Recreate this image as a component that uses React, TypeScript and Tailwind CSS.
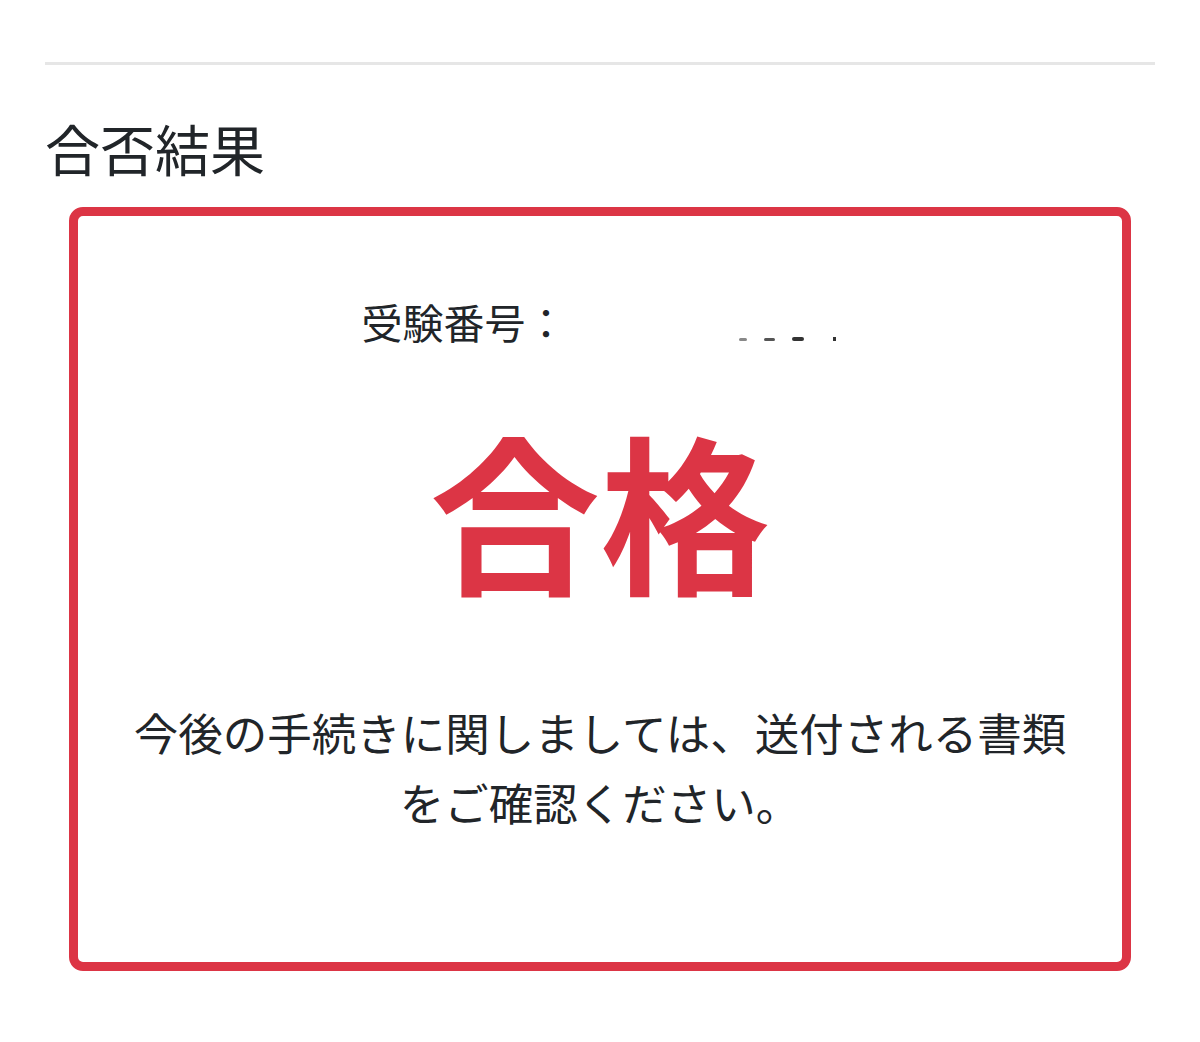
export default function App() {
  return (
    <div
      className="flex min-h-[1042px] w-[1200px] flex-col bg-white text-[#212529]"
      style={{ fontFamily: '"Noto Sans CJK JP", "Noto Sans", sans-serif' }}
    >
      <div className="px-[45px] pt-[62px]">
        <hr className="border-0 border-t-[3px] border-[#e6e6e6]" />
      </div>

      <h2 className="mt-[49px] pl-[45px] text-[55px] font-normal leading-[1.2]">合否結果</h2>

      {/* result card */}
      <div className="mx-[69px] mt-[27px] flex h-[764px] flex-col items-center rounded-[14px] border-[9px] border-[#dc3545] px-[40px] pt-[75px] text-center">
        <div className="flex items-center text-[41px] leading-[1.5]">
          <span>受験番号：</span>
          {/* masked number, only the tail of each digit shows */}
          <span className="flex h-[40px] w-[272px] items-end gap-[17px] pb-[1px] pl-[172px]">
            <span className="h-[3px] w-[8px] rounded-full bg-[#888]" />
            <span className="h-[3px] w-[11px] rounded-full bg-[#555]" />
            <span className="h-[4px] w-[12px] rounded-full bg-[#333]" />
            <span className="ml-[12px] h-[4px] w-[3px] bg-[#333]" />
          </span>
        </div>

        <p className="mt-[70px] text-[170px] font-bold leading-none text-[#dc3545]">合格</p>

        <p className="mt-[104px] text-[44.5px] leading-[70px]">
          今後の手続きに関しましては、送付される書類をご確認ください。
        </p>
      </div>
    </div>
  );
}
